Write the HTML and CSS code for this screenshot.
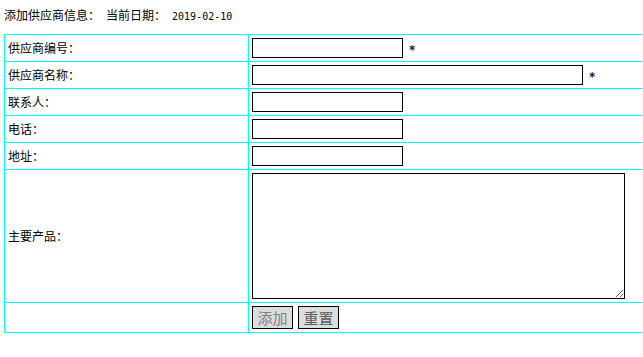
FILE: index.html
```html
<!DOCTYPE html>
<html lang="zh-CN">
<head>
<meta charset="utf-8">
<title>添加供应商信息</title>
<link rel="stylesheet" href="styles.css">
</head>
<body>
<div class="page">
  <div class="header">添加供应商信息：<span class="sp"></span>当前日期：<span class="sp"></span><span class="date">2019-02-10</span></div>
  <div class="form-grid">
    <div class="label">供应商编号：</div>
    <div class="field"><input class="inp" type="text"><span class="req">*</span></div>
    <div class="label">供应商名称：</div>
    <div class="field"><input class="inp wide" type="text"><span class="req">*</span></div>
    <div class="label">联系人：</div>
    <div class="field"><input class="inp" type="text"></div>
    <div class="label">电话：</div>
    <div class="field"><input class="inp" type="text"></div>
    <div class="label">地址：</div>
    <div class="field"><input class="inp" type="text"></div>
    <div class="label">主要产品：</div>
    <div class="field"><textarea class="area"></textarea></div>
    <div class="label"></div>
    <div class="field buttons"><button class="btn btn-add" type="button">添加</button><button class="btn btn-reset" type="reset">重置</button></div>
  </div>
</div>
</body>
</html>
```
FILE: styles.css
```css
html, body {
  margin: 0;
  padding: 0;
  background: #fff;
}
body {
  font-family: "Noto Sans CJK SC", "Liberation Sans", sans-serif;
  font-size: 12px;
  color: #000;
}
.page {
  padding: 4px 0 0 4px;
}
.header {
  padding-top: 3px;
  line-height: 16px;
  height: 16px;
  margin-bottom: 11px;
  white-space: nowrap;
}
.sp {
  display: inline-block;
  width: 6px;
}
.date {
  font-family: "DejaVu Sans Mono", "Liberation Mono", monospace;
  font-size: 10px;
}
.form-grid {
  display: grid;
  grid-template-columns: 244px 1fr;
  border-top: 1px solid #00ffff;
  border-left: 1px solid #00ffff;
}
.label {
  box-sizing: border-box;
  border-right: 1px solid #00ffff;
  border-bottom: 1px solid #00ffff;
  padding: 0 3px;
  display: flex;
  align-items: center;
  line-height: 16px;
}
.field {
  box-sizing: border-box;
  border-bottom: 1px solid #00ffff;
  padding: 3px;
  display: flex;
  align-items: center;
}
.inp {
  box-sizing: border-box;
  display: block;
  width: 151px;
  height: 20px;
  margin: 0;
  padding: 1px 2px;
  border: 1px solid #000;
  font-size: 12px;
  background: #fff;
  outline: none;
}
.inp.wide {
  width: 331px;
}
.req {
  display: block;
  margin-left: 6px;
  margin-top: 3px;
  font-family: "DejaVu Sans", sans-serif;
  font-weight: bold;
  font-size: 12px;
  line-height: 12px;
  color: #222;
}
.area {
  display: block;
  box-sizing: border-box;
  width: 373px;
  height: 126px;
  margin: 0;
  border: 1px solid #000;
  padding: 2px;
  outline: none;
}
.buttons {
  gap: 5px;
}
.btn {
  box-sizing: border-box;
  display: block;
  width: 41px;
  height: 23px;
  margin: 0;
  padding: 0;
  border: 1px solid #000;
  background: #dddddd;
  font-family: "Noto Sans CJK SC", sans-serif;
  font-size: 15px;
  line-height: 21px;
  border-radius: 0;
}
.btn-add {
  color: #808080;
}
.btn-reset {
  color: #5a5a5a;
}
```
